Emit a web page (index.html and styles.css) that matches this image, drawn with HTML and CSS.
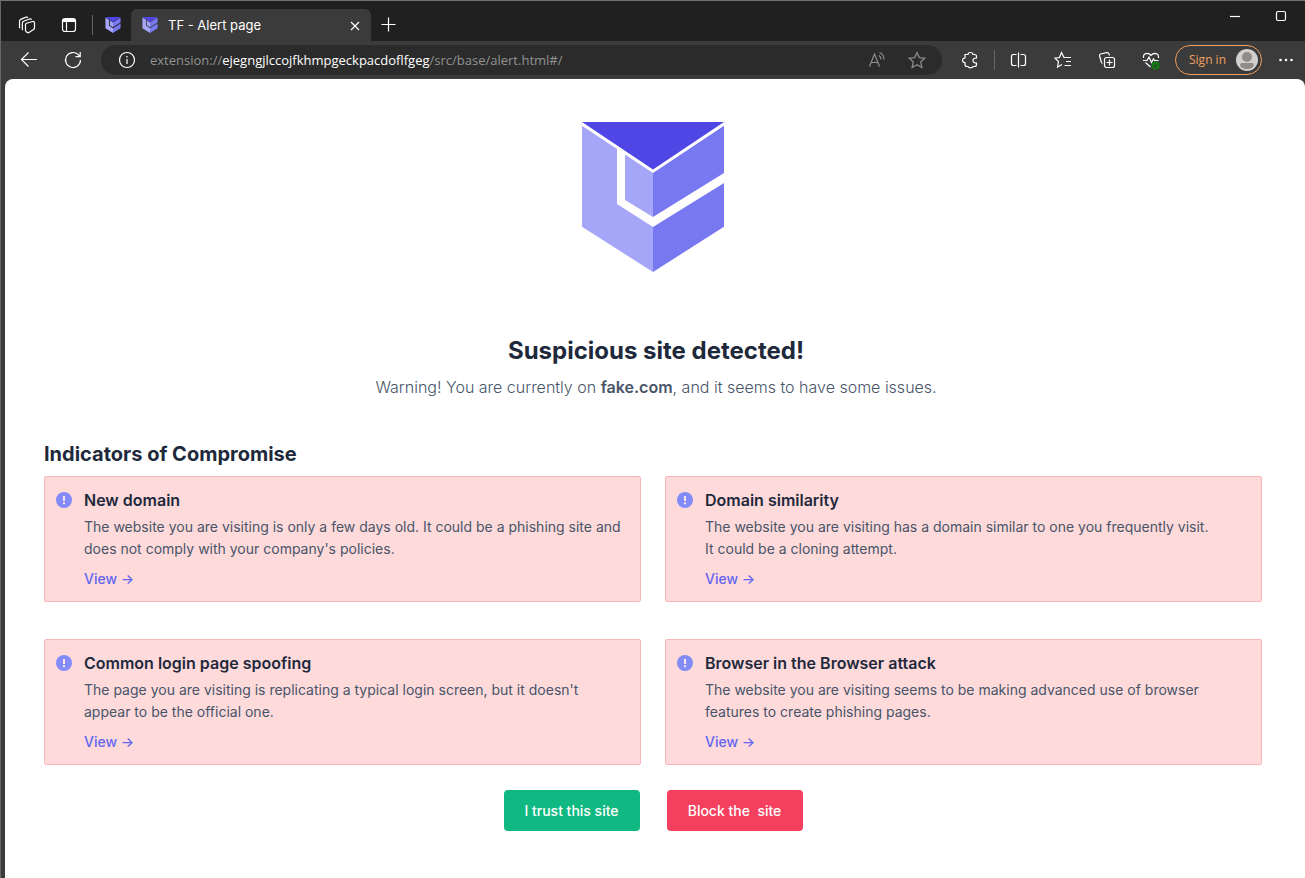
FILE: index.html
```html
<!DOCTYPE html>
<html lang="en">
<head>
<meta charset="utf-8">
<meta name="viewport" content="width=device-width, initial-scale=1">
<title>TF - Alert page</title>
<link rel="stylesheet" href="styles.css">
</head>
<body>
<svg class="defs" aria-hidden="true">
  <symbol id="shield" viewBox="0 0 142 150">
    <path fill="#4f46e5" d="M0 0H142L71 47.5Z"/>
    <path fill="#a5a6f8" d="M0 3.7L35 27V82L71 105V150L0 104.7Z"/>
    <path fill="#a5a6f8" d="M43 32.5L71 51V95L43 78Z"/>
    <path fill="#7879f1" d="M71 51L142 3.7V51L71 95Z"/>
    <path fill="#7879f1" d="M142 61V104.7L71 150V105Z"/>
  </symbol>
  <symbol id="alert" viewBox="0 0 16 16">
    <circle cx="8" cy="8" r="8" fill="#818cf8"/>
    <path fill="#ffe4e6" d="M7 4h2v5H7zM7 10.200h2v2H7z"/>
  </symbol>
</svg>

<header class="browser">
  <div class="titlebar">
    <div class="strip">
      <button class="tool" aria-label="Workspaces"><svg class="ico" viewBox="0 0 20 20"><path d="M8.500 9.500Q8.500 8.500 9.500 8.200L15.500 6.500Q17.500 6.200 17.500 8V13Q17.500 14 16.500 14.600L12 17.500Q10.800 18 10 17.300L9 16.500Q8.500 16 8.500 15ZM5.800 15L5.300 14.500V8.500Q5.300 7 6.500 6.300L12.500 4Q14 3.700 14.500 4.700M3 13L2.500 12.500V6.500Q2.500 5 3.700 4.400L9 2.200Q10.500 1.900 11 2.700"/></svg></button>
      <button class="tool" aria-label="Tab actions"><svg class="ico" viewBox="0 0 20 20"><rect x="3.500" y="3.500" width="13" height="13" rx="2.500"/><path d="M3.500 5.500H16.500" stroke-width="3"/><path d="M7.500 6V16.500"/></svg></button>
      <span class="rule"></span>
      <button class="pinned" aria-label="Pinned tab"><svg class="favicon"><use href="#shield"/></svg></button>
    </div>
    <div class="tab">
      <svg class="favicon" aria-hidden="true"><use href="#shield"/></svg>
      <span class="tab-title">TF - Alert page</span>
      <button class="close" aria-label="Close tab"><svg class="ico" viewBox="0 0 20 20"><path d="M6 7L14 15M14 7L6 15"/></svg></button>
    </div>
    <button class="new-tab" aria-label="New tab"><svg class="ico" viewBox="0 0 20 20"><path d="M9.500 2.500V16.500M2.500 9.500H16.500"/></svg></button>
    <div class="window-controls">
      <button class="tool" aria-label="Minimize"><svg class="ico" viewBox="0 0 20 20"><path d="M5 10.500H15"/></svg></button>
      <button class="tool" aria-label="Maximize"><svg class="ico" viewBox="0 0 20 20"><rect x="5.500" y="5.500" width="9" height="9" rx="1.500"/></svg></button>
    </div>
  </div>
  <div class="toolbar">
    <button class="tool" aria-label="Back"><svg class="ico" viewBox="0 0 20 20"><path d="M18 9.500H2.500M9.500 2.500L2.500 9.500L9.500 16.500"/></svg></button>
    <button class="tool" aria-label="Reload"><svg class="ico" viewBox="0 0 20 20"><path d="M17.500 10A7.500 7.500 0 1 1 15.300 4.700L17 6.500M17.200 2V6.700H12.500"/></svg></button>
    <div class="omnibox">
      <button class="tool" aria-label="Site information"><svg class="ico" viewBox="0 0 20 20"><circle cx="10" cy="10" r="7.500"/><path d="M10 9V14M10 6V7.500"/></svg></button>
      <div class="url" role="textbox" contenteditable="true" spellcheck="false" aria-label="Address">extension://<span class="host">ejegngjlccojfkhmpgeckpacdoflfgeg</span>/src/base/alert.html#/</div>
      <button class="tool-sm" aria-label="Read aloud"><svg class="ico dim" viewBox="0 0 20 20"><path d="M2.500 16.500L7.500 4L12.500 16.500M4.200 12.500H10.800M12 5.500Q14 7 14 9.500M12.500 2.500Q17 4.500 17 9.500"/></svg></button>
      <button class="tool-sm" aria-label="Add to favorites"><svg class="ico dim" viewBox="0 0 20 20"><path d="M10 2.500L12.300 7.600L17.800 8.200L13.700 12L14.900 17.500L10 14.700L5.100 17.500L6.300 12L2.200 8.200L7.700 7.600Z"/></svg></button>
    </div>
    <button class="tool" aria-label="Extensions"><svg class="ico" viewBox="0 0 20 20"><path d="M5 4.500H8Q8 2.500 10.500 2.500T13 4.500H14.500Q16.500 4.500 16.500 6.500V8Q13 8 13 10.500T16.500 13V14.500Q16.500 16.500 14.500 16.500H13Q12.500 17.800 10.500 17.800T8 16.500H7Q5 16.500 5 14.500V12.500Q2.500 12.500 2.500 10.300T5 8Z"/></svg></button>
    <span class="rule"></span>
    <button class="tool" aria-label="Split screen"><svg class="ico" viewBox="0 0 20 20"><path d="M7.500 4.500H4.500Q2.500 4.500 2.500 6.500V13.500Q2.500 15.500 4.500 15.500H7.500M11.500 4.500H14.500Q16.500 4.500 16.500 6.500V13.500Q16.500 15.500 14.500 15.500H11.500M9.500 2.500V17.500"/></svg></button>
    <button class="tool" aria-label="Favorites"><svg class="ico" viewBox="0 0 20 20"><path d="M13 7.500H11L8.500 2.500L6.500 7.500L2 8.200L5.500 11.500L4.500 17L9 14.500M11.500 7.500H18M13 11.500H18M11.500 15.500H18"/></svg></button>
    <button class="tool" aria-label="Collections"><svg class="ico" viewBox="0 0 20 20"><rect x="7.500" y="7.500" width="10" height="10" rx="2"/><path d="M12.500 9.500V15.500M9.500 12.500H15.500M5.500 13.500Q4.500 13 4.300 12L2.600 6Q2.300 4.500 3.500 4L9.500 2.600Q11.500 2.300 12 4L12.500 5.500"/></svg></button>
    <button class="tool" aria-label="Browser essentials"><svg class="ico" viewBox="0 0 20 20"><path d="M2.500 8Q2 3.500 6 3.300Q8.500 3.300 10 5.300Q11.500 3.300 14 3.300Q18 3.500 17.500 8M2 10.500H6L8 7L10.500 12.500L12.500 9L13.500 10.500H17.500M4.500 12.500L9.500 17"/><circle cx="14.500" cy="15.500" r="4" fill="#107c10" stroke="none"/><path d="M12.700 15.500L14 16.800L16.300 14.300" stroke="#3b3b3b"/></svg></button>
    <button class="signin">Sign in
      <svg class="avatar" viewBox="0 0 24 24" aria-hidden="true"><circle cx="12" cy="12" r="11" fill="#d2d0ce"/><circle cx="12" cy="9" r="5" fill="#8f8c89"/><path fill="#8f8c89" d="M5 17Q5 15 7 15H17Q19 15 19 17Q18 21 12 21T5 17Z"/></svg>
    </button>
    <button class="more" aria-label="Settings and more"><svg class="ico" viewBox="0 0 20 20"><g fill="#fff" stroke="none"><circle cx="4.500" cy="10" r="1.300"/><circle cx="10" cy="10" r="1.300"/><circle cx="15.500" cy="10" r="1.300"/></g></svg></button>
  </div>
</header>

<main class="page">
  <div class="intro">
    <svg class="logo" role="img" aria-label="TF logo"><use href="#shield"/></svg>
    <div class="intro-text">
      <h1>Suspicious site detected!</h1>
      <p>Warning! You are currently on <strong>fake.com</strong>, and it seems to have some issues.</p>
    </div>
  </div>
  <section>
    <h2>Indicators of Compromise</h2>
    <div class="cards">
      <article class="card">
        <svg class="badge" aria-hidden="true"><use href="#alert"/></svg>
        <div class="card-body">
          <h3>New domain</h3>
          <p>The website you are visiting is only a few days old. It could be a phishing site and does not comply with your company's policies.</p>
          <a href="#">View -&gt;</a>
        </div>
      </article>
      <article class="card">
        <svg class="badge" aria-hidden="true"><use href="#alert"/></svg>
        <div class="card-body">
          <h3>Domain similarity</h3>
          <p>The website you are visiting has a domain similar to one you frequently visit.<br>It could be a cloning attempt.</p>
          <a href="#">View -&gt;</a>
        </div>
      </article>
      <article class="card">
        <svg class="badge" aria-hidden="true"><use href="#alert"/></svg>
        <div class="card-body">
          <h3>Common login page spoofing</h3>
          <p>The page you are visiting is replicating a typical login screen, but it doesn't appear to be the official one.</p>
          <a href="#">View -&gt;</a>
        </div>
      </article>
      <article class="card">
        <svg class="badge" aria-hidden="true"><use href="#alert"/></svg>
        <div class="card-body">
          <h3>Browser in the Browser attack</h3>
          <p>The website you are visiting seems to be making advanced use of browser features to create phishing pages.</p>
          <a href="#">View -&gt;</a>
        </div>
      </article>
    </div>
  </section>
  <div class="actions">
    <button class="btn trust">I trust this site</button>
    <button class="btn block">Block the&nbsp; site</button>
  </div>
</main>
</body>
</html>
```

FILE: styles.css
```css
* { box-sizing: border-box; }
body {
  margin: 0;
  min-height: 100vh;
  display: flex;
  flex-direction: column;
  background: #3b3b3b;
  border-top: 1px solid #707372;
  border-left: 1px solid #666868;
  font-family: Inter, "Liberation Sans", sans-serif;
}
h1, h2, h3, p { margin: 0; }
button {
  border: 0;
  padding: 0;
  background: none;
  color: inherit;
  font: inherit;
  cursor: pointer;
}
.defs { display: none; }

/* Browser chrome */
.titlebar {
  display: flex;
  align-items: flex-end;
  height: 40px;
  background: #202020;
  color: #fff;
}
.strip { display: flex; align-items: center; height: 32px; padding-left: 5px; }
.tool, .tool-sm, .more {
  display: flex;
  align-items: center;
  justify-content: center;
  flex: none;
  height: 30px;
}
.tool { width: 42px; }
.tool-sm { width: 40px; }
.more { width: 38px; }
.ico {
  display: block;
  width: 20px;
  height: 20px;
  fill: none;
  stroke: #fff;
  stroke-width: 1.2;
}
.ico.dim { stroke: #8f8f8f; }
.rule { flex: none; width: 1px; height: 20px; margin: 0 2px; background: #666; }
.pinned { width: 36px; }
.favicon { display: block; flex: none; width: 16px; height: 16px; margin: auto; }
.tab {
  display: flex;
  align-items: center;
  flex: 0 1 240px;
  height: 32px;
  padding: 0 6px 1px 11px;
  border-radius: 6px 6px 0 0;
  background: #3b3b3b;
  font-size: 13px;
}
.tab .favicon { margin: 0 10px 0 0; }
.tab-title { flex: 1; white-space: nowrap; }
.close { width: 20px; height: 20px; }
.new-tab { height: 32px; width: 36px; display: flex; align-items: center; justify-content: center; }
.window-controls { display: flex; align-self: flex-start; gap: 4px; margin-left: auto; padding-right: 3px; }
.toolbar {
  display: flex;
  align-items: center;
  height: 38px;
  padding-left: 6px;
  color: #fff;
}
.toolbar > .tool { width: 44px; }
.omnibox {
  display: flex;
  align-items: center;
  flex: 1;
  min-width: 0;
  height: 30px;
  margin: 0 6px;
  padding: 0 5px;
  border-radius: 15px;
  background: #2b2b2b;
}
.url {
  flex: 1;
  min-width: 0;
  padding-left: 2px;
  overflow: hidden;
  white-space: nowrap;
  outline: none;
  color: #929292;
  font: 13px/20px "Open Sans", "Noto Sans", sans-serif;
}
.host { color: #fff; }
.signin {
  display: flex;
  align-items: center;
  justify-content: space-between;
  flex: none;
  width: 87px;
  height: 30px;
  margin: 0 5px 0 2px;
  padding: 0 2px 0 13px;
  border: 1px solid #f0a060;
  border-radius: 15px;
  color: #f0a060;
  font: 12px/20px "Open Sans", "Noto Sans", sans-serif;
}
.avatar { width: 24px; height: 24px; }

/* Alert page */
.page {
  flex: 1;
  margin-left: 4px;
  padding: 43px 43px 47px 39px;
  border-radius: 8px 8px 0 0;
  background: #fff;
  color: #475569;
}
.intro { text-align: center; }
.logo { display: block; width: 142px; height: 150px; margin: 0 auto 61px; }
.intro-text { padding-left: 6px; }
h1 {
  margin-bottom: 6px;
  color: #1e293b;
  font-size: 24px;
  font-weight: 700;
  line-height: 36px;
}
.intro p { font-size: 16px; font-weight: 300; line-height: 24px; }
.intro strong { font-weight: 600; }
h2 {
  margin: 41px 0 8px;
  color: #1e293b;
  font-size: 20px;
  font-weight: 700;
  line-height: 28px;
}
.cards {
  display: grid;
  grid-template-columns: repeat(2, minmax(0, 1fr));
  gap: 37px 24px;
}
.card {
  display: flex;
  gap: 12px;
  padding: 11px 16px 11px 11px;
  border: 1px solid #fbb6b9;
  border-radius: 2px;
  background: #ffdadb;
  font-size: 14px;
  line-height: 22px;
}
.badge { flex: none; width: 16px; height: 16px; margin-top: 4px; }
h3 {
  margin-bottom: 4px;
  color: #1e293b;
  font-size: 16px;
  font-weight: 600;
  line-height: 24px;
}
.card a {
  display: inline-block;
  margin-top: 8px;
  color: #6366f1;
  font-weight: 500;
  text-decoration: none;
  vertical-align: top;
}
.actions { display: flex; justify-content: center; gap: 27px; margin-top: 25px; }
.btn {
  min-width: 136px;
  height: 41px;
  padding: 0 20px;
  border-radius: 4px;
  color: #fff;
  font-size: 14px;
  font-weight: 500;
}
.trust { background: #10b981; }
.block { background: #f43f5e; }
```
